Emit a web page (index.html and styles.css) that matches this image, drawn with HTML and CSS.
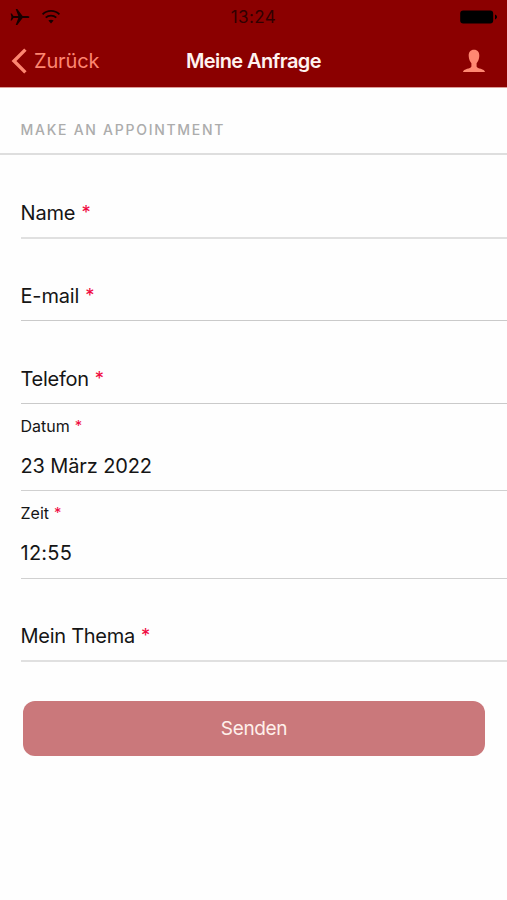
FILE: index.html
```html
<!DOCTYPE html>
<html lang="de">
<head>
<meta charset="utf-8">
<meta name="viewport" content="width=device-width, initial-scale=1">
<title>Meine Anfrage</title>
<link rel="stylesheet" href="styles.css">
</head>
<body>
<header class="header">
  <div class="status">
    <div class="status-left">
      <svg class="plane" width="20" height="18" viewBox="0 0 20 18"><path d="M19.4 9C19.4 8.1 18.3 7.9 17 7.9H12.6L7.3 1H5.7L8.3 7.9H3.5L1.8 5.6H.6L1.5 9L.6 12.4H1.8L3.5 10.1H8.3L5.7 17H7.3L12.6 10.1H17C18.3 10.1 19.4 9.9 19.4 9Z"/></svg>
      <svg class="wifi" width="20" height="16" viewBox="0 0 20 16"><g fill="none" stroke="#170000" stroke-width="1.8"><path d="M1.6 5.4C6.3 .8 13.7 .8 18.4 5.4"/><path d="M4.7 8.7C7.7 5.8 12.3 5.8 15.3 8.7"/></g><path d="M7.4 11.6C8.9 10.4 11.1 10.4 12.6 11.6L10 14.6Z"/></svg>
    </div>
    <time class="clock">13:24</time>
    <svg class="battery" width="40" height="16" viewBox="0 0 40 16"><rect x="1.2" y="1.5" width="33" height="13" rx="3"/><path d="M36 5.6C38.7 6.3 38.7 9.7 36 10.4Z"/></svg>
  </div>
  <nav class="nav">
    <a class="back"><svg width="16" height="26" viewBox="0 0 16 26"><path d="M14.4 1.6L3 13L14.4 24.4" fill="none" stroke="#fd8671" stroke-width="3.4"/></svg><span>Zurück</span></a>
    <h1 class="title">Meine Anfrage</h1>
    <svg class="person" width="24" height="24" viewBox="0 0 24 24"><path d="M12 .8C15.6 .8 17.5 3.3 17.3 7C17.1 10.2 16.1 12.5 14.6 14.2V17.4C15 19.8 22.8 19.4 23 23H1C1.2 19.4 9 19.8 9.4 17.4V14.2C7.9 12.5 6.9 10.2 6.7 7C6.5 3.3 8.4 .8 12 .8Z"/></svg>
  </nav>
</header>
<main>
  <h2 class="section"><span>MAKE AN APPOINTMENT</span></h2>
  <form class="form">
    <div class="field soft"><label class="label name">Name <b>*</b></label></div>
    <div class="field"><label class="label email">E-mail <b>*</b></label></div>
    <div class="field"><label class="label phone">Telefon <b>*</b></label></div>
    <div class="field filled"><label class="caption">Datum <b>*</b></label><span class="value date">23 März 2022</span></div>
    <div class="field filled last"><label class="caption">Zeit <b>*</b></label><span class="value time">12:55</span></div>
    <div class="field soft subject"><label class="label topic">Mein Thema <b>*</b></label></div>
    <button class="send" type="button">Senden</button>
  </form>
</main>
</body>
</html>
```

FILE: styles.css
```css
* { box-sizing: border-box; }
body {
  margin: 0;
  min-height: 900px;
  background: #fefefe;
  color: #151515;
  font-family: Inter, "Liberation Sans", sans-serif;
}
.header { height: 88px; background: #8b0000; border-bottom: 1px solid #dc9d98; }
.status {
  height: 34px;
  padding: 0 8px 0 10px;
  display: grid;
  grid-template-columns: 1fr auto 1fr;
  align-items: center;
}
.status svg { fill: #170000; display: block; }
.status-left { display: flex; align-items: center; gap: 11px; }
.clock { margin-right: 2px; font-size: 17px; letter-spacing: 0.4px; color: #300000; }
.status .battery { justify-self: end; fill: #000; }
.nav {
  height: 53px;
  padding: 0 11px;
  display: grid;
  grid-template-columns: 1fr auto 1fr;
  align-items: center;
}
.back { display: flex; align-items: center; gap: 7px; font-size: 20px; letter-spacing: -0.15px; color: #fd8671; }
.title { margin: 0; font-size: 20px; font-weight: 600; letter-spacing: -0.6px; color: #fff3f0; }
.person { justify-self: end; margin-right: 10px; fill: #ff8872; }
.section {
  margin: 0;
  height: 67px;
  padding: 33px 0 0 20.5px;
  border-bottom: 2px solid #dedede;
  font-size: 14px;
  line-height: 18px;
  font-weight: 500;
  letter-spacing: 1.73px;
  color: #acacac;
}
.form { padding-left: 21px; }
.field {
  height: 83px;
  display: flex;
  flex-direction: column;
  justify-content: flex-end;
  padding-bottom: 12px;
  border-bottom: 1px solid #cacaca;
}
.label, .value { margin-left: -0.5px; font-size: 20px; line-height: 24px; }
.field b {
  margin-left: 0.6px;
  font-size: 0.92em;
  line-height: 1;
  font-weight: 400;
  vertical-align: 1px;
  color: #f00b42;
}
.field.soft { margin-bottom: -1px; height: 84px; border-bottom: 2px solid #e0e0e0; }
.field.subject { height: 83px; }
.name, .email { letter-spacing: -0.15px; }
.phone, .topic { letter-spacing: -0.27px; }
.date { letter-spacing: -0.12px; }
.time { letter-spacing: 0.25px; }
.filled { height: 87px; border-bottom-color: #d0d0d0; }
.filled.last { height: 88px; padding-bottom: 13px; }
.caption { font-size: 16px; line-height: 20px; margin: 0 0 18px -0.5px; }
.send {
  display: block;
  width: 462px;
  height: 55px;
  margin: 40px 0 0 2px;
  padding: 0;
  border: 0;
  border-radius: 12px;
  background: #ca787b;
  color: #fff0eb;
  font: 400 19px/55px Inter, sans-serif;
  letter-spacing: -0.35px;
}
```
